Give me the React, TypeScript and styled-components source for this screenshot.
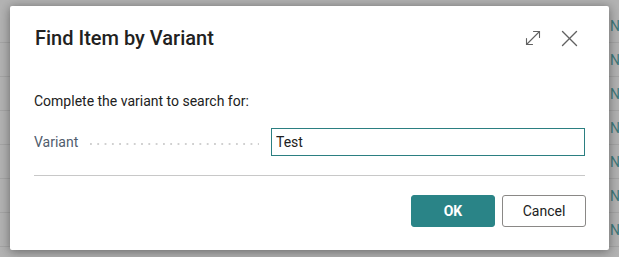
import React from 'react';
import styled, {createGlobalStyle} from 'styled-components';

const GlobalStyle = createGlobalStyle`
    html, body {
        margin: 0;
        padding: 0;
        background: #b2b2b2;
        font-family: "Segoe UI", Roboto, "Open Sans", sans-serif;
        overflow: hidden;
    }
`;

const Page = styled.div`
    position: relative;
    width: 619px;
    height: 257px;
    overflow: hidden;
`;

const ListBehind = styled.div`
    padding-top: 9px;
    display: flex;
    flex-direction: column;
`;

const ListRow = styled.div`
    height: 33px;
    border-bottom: 1px solid #a4a4a4;
    display: flex;
    align-items: center;
    padding-left: 610px;
    font-size: 14px;
    color: #3f7a7c;
    white-space: nowrap;
`;

const Dialog = styled.div`
    position: absolute;
    top: 6px;
    left: 10px;
    width: 599px;
    height: 244px;
    box-sizing: border-box;
    background: #ffffff;
    border-radius: 2px;
    box-shadow: 0 0 8px rgba(0, 0, 0, 0.25), 0 4px 12px rgba(0, 0, 0, 0.2);
    padding: 18px 24px 0 24px;
    display: flex;
    flex-direction: column;
`;

const Header = styled.div`
    display: flex;
    align-items: center;
    justify-content: space-between;
    height: 28px;
`;

const Title = styled.h1`
    margin: 0 0 0 1px;
    font-size: 20px;
    font-weight: 500;
    line-height: 28px;
    color: #212121;
`;

const HeaderActions = styled.div`
    display: flex;
    align-items: center;
    gap: 20px;
    margin-right: 7px;
`;

const IconButton = styled.button`
    border: 0;
    background: transparent;
    padding: 0;
    width: 17px;
    height: 17px;
    display: flex;
    align-items: center;
    justify-content: center;
    cursor: pointer;
`;

const Instruction = styled.p`
    margin: 39px 0 0 0;
    font-size: 14px;
    line-height: 20px;
    color: #212121;
`;

const FieldRow = styled.div`
    display: flex;
    align-items: center;
    margin-top: 17px;
    height: 28px;
    gap: 12px;
`;

const LabelCell = styled.div`
    flex: 1;
    display: flex;
    align-items: center;
    gap: 12px;
`;

const Label = styled.label`
    font-size: 14px;
    color: #505c6d;
    white-space: nowrap;
`;

const Leader = styled.div`
    flex: 1;
    height: 2px;
    margin-top: 3px;
    background-image: linear-gradient(to right, #d0d0d0 2px, transparent 2px);
    background-size: 7.3px 2px;
    background-repeat: repeat-x;
`;

const TextInput = styled.input`
    width: 314px;
    height: 28px;
    box-sizing: border-box;
    border: 1px solid #2b7f81;
    border-radius: 0;
    padding: 0 4px;
    font-family: inherit;
    font-size: 14px;
    color: #212121;
    outline: none;
`;

const Divider = styled.hr`
    margin: 19px 0 0 0;
    border: 0;
    border-top: 1px solid #c8c8c8;
`;

const Footer = styled.div`
    display: flex;
    justify-content: flex-end;
    gap: 7px;
    margin-top: 19px;
    margin-right: -1px;
`;

const Button = styled.button<{primary?: boolean}>`
    width: 84px;
    height: 32px;
    box-sizing: border-box;
    border-radius: 3px;
    font-family: inherit;
    font-size: 14px;
    font-weight: ${(props) => (props.primary ? 700 : 400)};
    color: ${(props) => (props.primary ? '#ffffff' : '#212121')};
    background: ${(props) => (props.primary ? '#2a8487' : '#ffffff')};
    border: 1px solid ${(props) => (props.primary ? '#2a8487' : '#8a8886')};
    cursor: pointer;
`;

const ExpandIcon = () => (
    <svg width='16' height='16' viewBox='0 0 16 16' fill='none' stroke='#616161' strokeWidth='1.1' strokeLinecap='round'>
        <path d='M1.5 14.5 L14.5 1.5'/>
        <path d='M8.5 1.5 H14.5 V7.5'/>
        <path d='M1.5 8.5 V14.5 H7.5'/>
    </svg>
);

const CloseIcon = () => (
    <svg width='17' height='17' viewBox='0 0 17 17' fill='none' stroke='#616161' strokeWidth='1.4' strokeLinecap='round'>
        <path d='M1.5 1.5 L15.5 15.5'/>
        <path d='M15.5 1.5 L1.5 15.5'/>
    </svg>
);

const rows = Array.from({length: 7});

export default function App() {
    return (
        <Page>
            <GlobalStyle/>
            <ListBehind>
                {rows.map((_, i) => (
                    <ListRow key={i}>New</ListRow>
                ))}
            </ListBehind>
            <Dialog role='dialog'>
                <Header>
                    <Title>Find Item by Variant</Title>
                    <HeaderActions>
                        <IconButton aria-label='Expand'><ExpandIcon/></IconButton>
                        <IconButton aria-label='Close'><CloseIcon/></IconButton>
                    </HeaderActions>
                </Header>
                <Instruction>Complete the variant to search for:</Instruction>
                <FieldRow>
                    <LabelCell>
                        <Label htmlFor='variant'>Variant</Label>
                        <Leader/>
                    </LabelCell>
                    <TextInput id='variant' defaultValue='Test'/>
                </FieldRow>
                <Divider/>
                <Footer>
                    <Button primary>OK</Button>
                    <Button>Cancel</Button>
                </Footer>
            </Dialog>
        </Page>
    );
}
